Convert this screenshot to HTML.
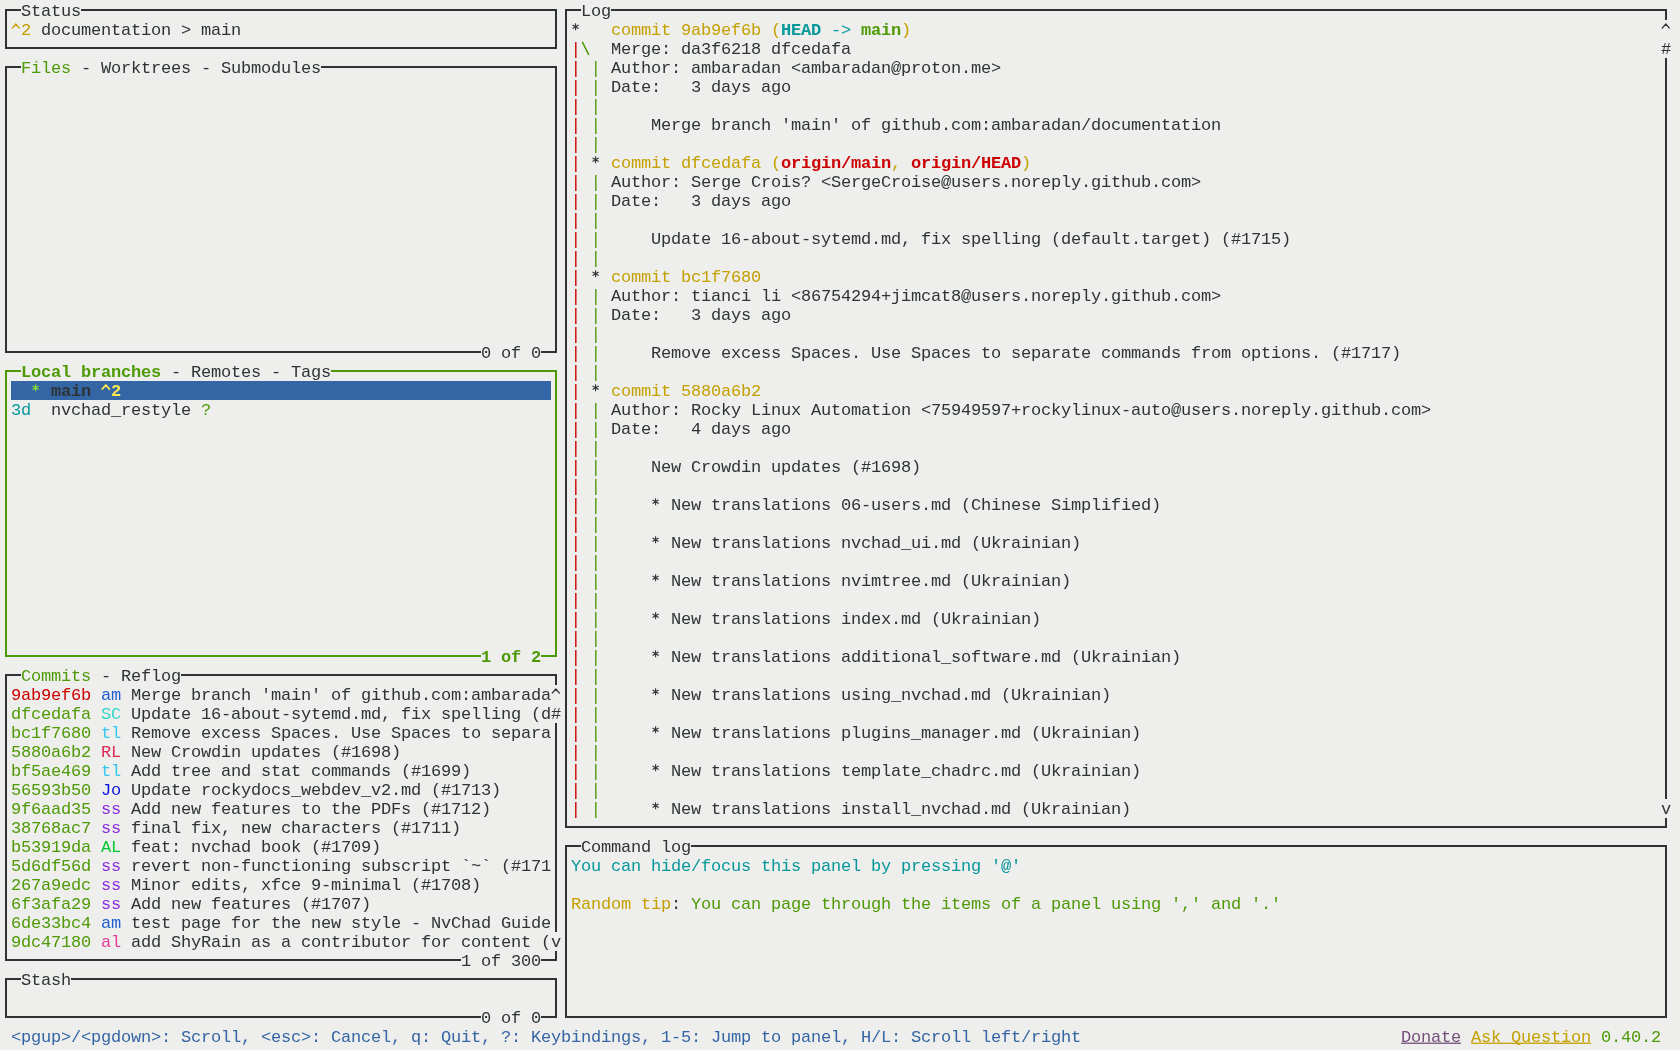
<!DOCTYPE html><html><head><meta charset="utf-8"><style>
html,body{margin:0;padding:0;}
body{width:1680px;height:1050px;overflow:hidden;background:#eeeeec;position:relative;}
.l{position:absolute;}
.r{position:absolute;left:1px;height:19px;white-space:pre;font-family:"Liberation Mono",monospace;font-size:17.0px;line-height:19px;letter-spacing:-0.2017px;color:#2e3436;will-change:transform;}
.b{font-weight:bold;}
svg{position:absolute;left:0;top:0;}

</style></head><body>
<div class="l" style="left:5px;top:9px;width:552px;height:2px;background:#2e3436"></div>
<div class="l" style="left:5px;top:47px;width:552px;height:2px;background:#2e3436"></div>
<div class="l" style="left:5px;top:9px;width:2px;height:40px;background:#2e3436"></div>
<div class="l" style="left:555px;top:9px;width:2px;height:40px;background:#2e3436"></div>
<div class="l" style="left:5px;top:66px;width:552px;height:2px;background:#2e3436"></div>
<div class="l" style="left:5px;top:351px;width:552px;height:2px;background:#2e3436"></div>
<div class="l" style="left:5px;top:66px;width:2px;height:287px;background:#2e3436"></div>
<div class="l" style="left:555px;top:66px;width:2px;height:287px;background:#2e3436"></div>
<div class="l" style="left:5px;top:370px;width:552px;height:2px;background:#4e9a06"></div>
<div class="l" style="left:5px;top:655px;width:552px;height:2px;background:#4e9a06"></div>
<div class="l" style="left:5px;top:370px;width:2px;height:287px;background:#4e9a06"></div>
<div class="l" style="left:555px;top:370px;width:2px;height:287px;background:#4e9a06"></div>
<div class="l" style="left:5px;top:674px;width:552px;height:2px;background:#2e3436"></div>
<div class="l" style="left:5px;top:959px;width:552px;height:2px;background:#2e3436"></div>
<div class="l" style="left:5px;top:674px;width:2px;height:287px;background:#2e3436"></div>
<div class="l" style="left:555px;top:674px;width:2px;height:287px;background:#2e3436"></div>
<div class="l" style="left:5px;top:978px;width:552px;height:2px;background:#2e3436"></div>
<div class="l" style="left:5px;top:1016px;width:552px;height:2px;background:#2e3436"></div>
<div class="l" style="left:5px;top:978px;width:2px;height:40px;background:#2e3436"></div>
<div class="l" style="left:555px;top:978px;width:2px;height:40px;background:#2e3436"></div>
<div class="l" style="left:565px;top:9px;width:1102px;height:2px;background:#2e3436"></div>
<div class="l" style="left:565px;top:826px;width:1102px;height:2px;background:#2e3436"></div>
<div class="l" style="left:565px;top:9px;width:2px;height:819px;background:#2e3436"></div>
<div class="l" style="left:1665px;top:9px;width:2px;height:819px;background:#2e3436"></div>
<div class="l" style="left:565px;top:845px;width:1102px;height:2px;background:#2e3436"></div>
<div class="l" style="left:565px;top:1016px;width:1102px;height:2px;background:#2e3436"></div>
<div class="l" style="left:565px;top:845px;width:2px;height:173px;background:#2e3436"></div>
<div class="l" style="left:1665px;top:845px;width:2px;height:173px;background:#2e3436"></div>
<div class="l" style="left:21px;top:1px;width:60px;height:19px;background:#eeeeec"></div>
<div class="l" style="left:581px;top:1px;width:30px;height:19px;background:#eeeeec"></div>
<div class="l" style="left:1661px;top:20px;width:10px;height:19px;background:#eeeeec"></div>
<div class="l" style="left:1661px;top:39px;width:10px;height:19px;background:#eeeeec"></div>
<div class="l" style="left:21px;top:58px;width:300px;height:19px;background:#eeeeec"></div>
<div class="l" style="left:481px;top:343px;width:60px;height:19px;background:#eeeeec"></div>
<div class="l" style="left:21px;top:362px;width:310px;height:19px;background:#eeeeec"></div>
<div class="l" style="left:11px;top:381px;width:540px;height:19px;background:#3465a4"></div>
<div class="l" style="left:481px;top:647px;width:60px;height:19px;background:#eeeeec"></div>
<div class="l" style="left:21px;top:666px;width:160px;height:19px;background:#eeeeec"></div>
<div class="l" style="left:551px;top:685px;width:10px;height:19px;background:#eeeeec"></div>
<div class="l" style="left:551px;top:704px;width:10px;height:19px;background:#eeeeec"></div>
<div class="l" style="left:1661px;top:799px;width:10px;height:19px;background:#eeeeec"></div>
<div class="l" style="left:581px;top:837px;width:110px;height:19px;background:#eeeeec"></div>
<div class="l" style="left:551px;top:932px;width:10px;height:19px;background:#eeeeec"></div>
<div class="l" style="left:461px;top:951px;width:80px;height:19px;background:#eeeeec"></div>
<div class="l" style="left:21px;top:970px;width:50px;height:19px;background:#eeeeec"></div>
<div class="l" style="left:481px;top:1008px;width:60px;height:19px;background:#eeeeec"></div>
<div class="r" style="top:2px">  <span style="color:#2e3436">Status</span>                                                  <span style="color:#2e3436">Log</span></div>
<div class="r" style="top:21px">  <span style="color:#c4a000">2</span> <span style="color:#2e3436">documentation</span> <span style="color:#2e3436">&gt;</span> <span style="color:#2e3436">main</span>                                     <span style="color:#c4a000">commit</span> <span style="color:#c4a000">9ab9ef6b</span> <span style="color:#c4a000">(</span><span class="b" style="color:#06989a">HEAD</span> <span style="color:#06989a">-&gt;</span> <span class="b" style="color:#4e9a06">main</span><span style="color:#c4a000">)</span></div>
<div class="r" style="top:40px">                                                             <span style="color:#2e3436">Merge:</span> <span style="color:#2e3436">da3f6218</span> <span style="color:#2e3436">dfcedafa</span>                                                                                 <span style="color:#2e3436">#</span></div>
<div class="r" style="top:59px">  <span style="color:#4e9a06">Files</span> <span style="color:#2e3436">-</span> <span style="color:#2e3436">Worktrees</span> <span style="color:#2e3436">-</span> <span style="color:#2e3436">Submodules</span>                             <span style="color:#2e3436">Author:</span> <span style="color:#2e3436">ambaradan</span> <span style="color:#2e3436">&lt;ambaradan@proton.me&gt;</span></div>
<div class="r" style="top:78px">                                                             <span style="color:#2e3436">Date:</span>   <span style="color:#2e3436">3</span> <span style="color:#2e3436">days</span> <span style="color:#2e3436">ago</span></div>
<div class="r" style="top:116px">                                                                 <span style="color:#2e3436">Merge</span> <span style="color:#2e3436">branch</span> <span style="color:#2e3436">&#x27;main&#x27;</span> <span style="color:#2e3436">of</span> <span style="color:#2e3436">github.com:ambaradan/documentation</span></div>
<div class="r" style="top:154px">                                                             <span style="color:#c4a000">commit</span> <span style="color:#c4a000">dfcedafa</span> <span style="color:#c4a000">(</span><span class="b" style="color:#cc0000">origin/main</span><span style="color:#c4a000">,</span> <span class="b" style="color:#cc0000">origin/HEAD</span><span style="color:#c4a000">)</span></div>
<div class="r" style="top:173px">                                                             <span style="color:#2e3436">Author:</span> <span style="color:#2e3436">Serge</span> <span style="color:#2e3436">Crois?</span> <span style="color:#2e3436">&lt;SergeCroise@users.noreply.github.com&gt;</span></div>
<div class="r" style="top:192px">                                                             <span style="color:#2e3436">Date:</span>   <span style="color:#2e3436">3</span> <span style="color:#2e3436">days</span> <span style="color:#2e3436">ago</span></div>
<div class="r" style="top:230px">                                                                 <span style="color:#2e3436">Update</span> <span style="color:#2e3436">16-about-sytemd.md,</span> <span style="color:#2e3436">fix</span> <span style="color:#2e3436">spelling</span> <span style="color:#2e3436">(default.target)</span> <span style="color:#2e3436">(#1715)</span></div>
<div class="r" style="top:268px">                                                             <span style="color:#c4a000">commit</span> <span style="color:#c4a000">bc1f7680</span></div>
<div class="r" style="top:287px">                                                             <span style="color:#2e3436">Author:</span> <span style="color:#2e3436">tianci</span> <span style="color:#2e3436">li</span> <span style="color:#2e3436">&lt;86754294+jimcat8@users.noreply.github.com&gt;</span></div>
<div class="r" style="top:306px">                                                             <span style="color:#2e3436">Date:</span>   <span style="color:#2e3436">3</span> <span style="color:#2e3436">days</span> <span style="color:#2e3436">ago</span></div>
<div class="r" style="top:344px">                                                <span style="color:#2e3436">0</span> <span style="color:#2e3436">of</span> <span style="color:#2e3436">0</span>           <span style="color:#2e3436">Remove</span> <span style="color:#2e3436">excess</span> <span style="color:#2e3436">Spaces.</span> <span style="color:#2e3436">Use</span> <span style="color:#2e3436">Spaces</span> <span style="color:#2e3436">to</span> <span style="color:#2e3436">separate</span> <span style="color:#2e3436">commands</span> <span style="color:#2e3436">from</span> <span style="color:#2e3436">options.</span> <span style="color:#2e3436">(#1717)</span></div>
<div class="r" style="top:363px">  <span class="b" style="color:#4e9a06">Local</span> <span class="b" style="color:#4e9a06">branches</span> <span style="color:#2e3436">-</span> <span style="color:#2e3436">Remotes</span> <span style="color:#2e3436">-</span> <span style="color:#2e3436">Tags</span></div>
<div class="r" style="top:382px">     <span class="b" style="color:#2e3436">main</span>  <span class="b" style="color:#fce94f">2</span>                                                 <span style="color:#c4a000">commit</span> <span style="color:#c4a000">5880a6b2</span></div>
<div class="r" style="top:401px"> <span style="color:#06989a">3d</span>  <span style="color:#2e3436">nvchad_restyle</span> <span style="color:#4e9a06">?</span>                                        <span style="color:#2e3436">Author:</span> <span style="color:#2e3436">Rocky</span> <span style="color:#2e3436">Linux</span> <span style="color:#2e3436">Automation</span> <span style="color:#2e3436">&lt;75949597+rockylinux-auto@users.noreply.github.com&gt;</span></div>
<div class="r" style="top:420px">                                                             <span style="color:#2e3436">Date:</span>   <span style="color:#2e3436">4</span> <span style="color:#2e3436">days</span> <span style="color:#2e3436">ago</span></div>
<div class="r" style="top:458px">                                                                 <span style="color:#2e3436">New</span> <span style="color:#2e3436">Crowdin</span> <span style="color:#2e3436">updates</span> <span style="color:#2e3436">(#1698)</span></div>
<div class="r" style="top:496px">                                                                   <span style="color:#2e3436">New</span> <span style="color:#2e3436">translations</span> <span style="color:#2e3436">06-users.md</span> <span style="color:#2e3436">(Chinese</span> <span style="color:#2e3436">Simplified)</span></div>
<div class="r" style="top:534px">                                                                   <span style="color:#2e3436">New</span> <span style="color:#2e3436">translations</span> <span style="color:#2e3436">nvchad_ui.md</span> <span style="color:#2e3436">(Ukrainian)</span></div>
<div class="r" style="top:572px">                                                                   <span style="color:#2e3436">New</span> <span style="color:#2e3436">translations</span> <span style="color:#2e3436">nvimtree.md</span> <span style="color:#2e3436">(Ukrainian)</span></div>
<div class="r" style="top:610px">                                                                   <span style="color:#2e3436">New</span> <span style="color:#2e3436">translations</span> <span style="color:#2e3436">index.md</span> <span style="color:#2e3436">(Ukrainian)</span></div>
<div class="r" style="top:648px">                                                <span class="b" style="color:#4e9a06">1</span> <span class="b" style="color:#4e9a06">of</span> <span class="b" style="color:#4e9a06">2</span>             <span style="color:#2e3436">New</span> <span style="color:#2e3436">translations</span> <span style="color:#2e3436">additional_software.md</span> <span style="color:#2e3436">(Ukrainian)</span></div>
<div class="r" style="top:667px">  <span style="color:#4e9a06">Commits</span> <span style="color:#2e3436">-</span> <span style="color:#2e3436">Reflog</span></div>
<div class="r" style="top:686px"> <span style="color:#cc0000">9ab9ef6b</span> <span style="color:#1f5fd2">am</span> <span style="color:#2e3436">Merge</span> <span style="color:#2e3436">branch</span> <span style="color:#2e3436">&#x27;main&#x27;</span> <span style="color:#2e3436">of</span> <span style="color:#2e3436">github.com:ambarada</span>            <span style="color:#2e3436">New</span> <span style="color:#2e3436">translations</span> <span style="color:#2e3436">using_nvchad.md</span> <span style="color:#2e3436">(Ukrainian)</span></div>
<div class="r" style="top:705px"> <span style="color:#4e9a06">dfcedafa</span> <span style="color:#33d6c6">SC</span> <span style="color:#2e3436">Update</span> <span style="color:#2e3436">16-about-sytemd.md,</span> <span style="color:#2e3436">fix</span> <span style="color:#2e3436">spelling</span> <span style="color:#2e3436">(d#</span></div>
<div class="r" style="top:724px"> <span style="color:#4e9a06">bc1f7680</span> <span style="color:#36c6f0">tl</span> <span style="color:#2e3436">Remove</span> <span style="color:#2e3436">excess</span> <span style="color:#2e3436">Spaces.</span> <span style="color:#2e3436">Use</span> <span style="color:#2e3436">Spaces</span> <span style="color:#2e3436">to</span> <span style="color:#2e3436">separa</span>            <span style="color:#2e3436">New</span> <span style="color:#2e3436">translations</span> <span style="color:#2e3436">plugins_manager.md</span> <span style="color:#2e3436">(Ukrainian)</span></div>
<div class="r" style="top:743px"> <span style="color:#4e9a06">5880a6b2</span> <span style="color:#dc2a52">RL</span> <span style="color:#2e3436">New</span> <span style="color:#2e3436">Crowdin</span> <span style="color:#2e3436">updates</span> <span style="color:#2e3436">(#1698)</span></div>
<div class="r" style="top:762px"> <span style="color:#4e9a06">bf5ae469</span> <span style="color:#36c6f0">tl</span> <span style="color:#2e3436">Add</span> <span style="color:#2e3436">tree</span> <span style="color:#2e3436">and</span> <span style="color:#2e3436">stat</span> <span style="color:#2e3436">commands</span> <span style="color:#2e3436">(#1699)</span>                    <span style="color:#2e3436">New</span> <span style="color:#2e3436">translations</span> <span style="color:#2e3436">template_chadrc.md</span> <span style="color:#2e3436">(Ukrainian)</span></div>
<div class="r" style="top:781px"> <span style="color:#4e9a06">56593b50</span> <span style="color:#0a14e0">Jo</span> <span style="color:#2e3436">Update</span> <span style="color:#2e3436">rockydocs_webdev_v2.md</span> <span style="color:#2e3436">(#1713)</span></div>
<div class="r" style="top:800px"> <span style="color:#4e9a06">9f6aad35</span> <span style="color:#8a2be2">ss</span> <span style="color:#2e3436">Add</span> <span style="color:#2e3436">new</span> <span style="color:#2e3436">features</span> <span style="color:#2e3436">to</span> <span style="color:#2e3436">the</span> <span style="color:#2e3436">PDFs</span> <span style="color:#2e3436">(#1712)</span>                  <span style="color:#2e3436">New</span> <span style="color:#2e3436">translations</span> <span style="color:#2e3436">install_nvchad.md</span> <span style="color:#2e3436">(Ukrainian)</span>                                                     <span style="color:#2e3436">v</span></div>
<div class="r" style="top:819px"> <span style="color:#4e9a06">38768ac7</span> <span style="color:#8a2be2">ss</span> <span style="color:#2e3436">final</span> <span style="color:#2e3436">fix,</span> <span style="color:#2e3436">new</span> <span style="color:#2e3436">characters</span> <span style="color:#2e3436">(#1711)</span></div>
<div class="r" style="top:838px"> <span style="color:#4e9a06">b53919da</span> <span style="color:#00c835">AL</span> <span style="color:#2e3436">feat:</span> <span style="color:#2e3436">nvchad</span> <span style="color:#2e3436">book</span> <span style="color:#2e3436">(#1709)</span>                    <span style="color:#2e3436">Command</span> <span style="color:#2e3436">log</span></div>
<div class="r" style="top:857px"> <span style="color:#4e9a06">5d6df56d</span> <span style="color:#8a2be2">ss</span> <span style="color:#2e3436">revert</span> <span style="color:#2e3436">non-functioning</span> <span style="color:#2e3436">subscript</span> <span style="color:#2e3436">`~`</span> <span style="color:#2e3436">(#171</span>  <span style="color:#06989a">You</span> <span style="color:#06989a">can</span> <span style="color:#06989a">hide/focus</span> <span style="color:#06989a">this</span> <span style="color:#06989a">panel</span> <span style="color:#06989a">by</span> <span style="color:#06989a">pressing</span> <span style="color:#06989a">&#x27;@&#x27;</span></div>
<div class="r" style="top:876px"> <span style="color:#4e9a06">267a9edc</span> <span style="color:#8a2be2">ss</span> <span style="color:#2e3436">Minor</span> <span style="color:#2e3436">edits,</span> <span style="color:#2e3436">xfce</span> <span style="color:#2e3436">9-minimal</span> <span style="color:#2e3436">(#1708)</span></div>
<div class="r" style="top:895px"> <span style="color:#4e9a06">6f3afa29</span> <span style="color:#8a2be2">ss</span> <span style="color:#2e3436">Add</span> <span style="color:#2e3436">new</span> <span style="color:#2e3436">features</span> <span style="color:#2e3436">(#1707)</span>                    <span style="color:#c4a000">Random</span> <span style="color:#c4a000">tip</span><span style="color:#2e3436">:</span> <span style="color:#4e9a06">You</span> <span style="color:#4e9a06">can</span> <span style="color:#4e9a06">page</span> <span style="color:#4e9a06">through</span> <span style="color:#4e9a06">the</span> <span style="color:#4e9a06">items</span> <span style="color:#4e9a06">of</span> <span style="color:#4e9a06">a</span> <span style="color:#4e9a06">panel</span> <span style="color:#4e9a06">using</span> <span style="color:#4e9a06">&#x27;,&#x27;</span> <span style="color:#4e9a06">and</span> <span style="color:#4e9a06">&#x27;.&#x27;</span></div>
<div class="r" style="top:914px"> <span style="color:#4e9a06">6de33bc4</span> <span style="color:#1f5fd2">am</span> <span style="color:#2e3436">test</span> <span style="color:#2e3436">page</span> <span style="color:#2e3436">for</span> <span style="color:#2e3436">the</span> <span style="color:#2e3436">new</span> <span style="color:#2e3436">style</span> <span style="color:#2e3436">-</span> <span style="color:#2e3436">NvChad</span> <span style="color:#2e3436">Guide</span></div>
<div class="r" style="top:933px"> <span style="color:#4e9a06">9dc47180</span> <span style="color:#e23e98">al</span> <span style="color:#2e3436">add</span> <span style="color:#2e3436">ShyRain</span> <span style="color:#2e3436">as</span> <span style="color:#2e3436">a</span> <span style="color:#2e3436">contributor</span> <span style="color:#2e3436">for</span> <span style="color:#2e3436">content</span> <span style="color:#2e3436">(v</span></div>
<div class="r" style="top:952px">                                              <span style="color:#2e3436">1</span> <span style="color:#2e3436">of</span> <span style="color:#2e3436">300</span></div>
<div class="r" style="top:971px">  <span style="color:#2e3436">Stash</span></div>
<div class="r" style="top:1009px">                                                <span style="color:#2e3436">0</span> <span style="color:#2e3436">of</span> <span style="color:#2e3436">0</span></div>
<div class="r" style="top:1028px"> <span style="color:#3465a4">&lt;pgup&gt;/&lt;pgdown&gt;:</span> <span style="color:#3465a4">Scroll,</span> <span style="color:#3465a4">&lt;esc&gt;:</span> <span style="color:#3465a4">Cancel,</span> <span style="color:#3465a4">q:</span> <span style="color:#3465a4">Quit,</span> <span style="color:#3465a4">?:</span> <span style="color:#3465a4">Keybindings,</span> <span style="color:#3465a4">1-5:</span> <span style="color:#3465a4">Jump</span> <span style="color:#3465a4">to</span> <span style="color:#3465a4">panel,</span> <span style="color:#3465a4">H/L:</span> <span style="color:#3465a4">Scroll</span> <span style="color:#3465a4">left/right</span>                                <span style="color:#75507b">Donate</span> <span style="color:#c4a000">Ask</span> <span style="color:#c4a000">Question</span> <span style="color:#4e9a06">0.40.2</span></div>
<svg width="1680" height="1050"><rect x="575.1" y="42" width="1.4" height="16" fill="#cc0000"/><line x1="582.5" y1="42.3" x2="588.6" y2="54.4" stroke="#4e9a06" stroke-width="1.5" stroke-linecap="round"/><rect x="575.1" y="61" width="1.4" height="16" fill="#cc0000"/><rect x="595.1" y="61" width="1.4" height="16" fill="#4e9a06"/><rect x="575.1" y="80" width="1.4" height="16" fill="#cc0000"/><rect x="595.1" y="80" width="1.4" height="16" fill="#4e9a06"/><rect x="575.1" y="99" width="1.4" height="16" fill="#cc0000"/><rect x="595.1" y="99" width="1.4" height="16" fill="#4e9a06"/><rect x="575.1" y="118" width="1.4" height="16" fill="#cc0000"/><rect x="595.1" y="118" width="1.4" height="16" fill="#4e9a06"/><rect x="575.1" y="137" width="1.4" height="16" fill="#cc0000"/><rect x="595.1" y="137" width="1.4" height="16" fill="#4e9a06"/><rect x="575.1" y="156" width="1.4" height="16" fill="#cc0000"/><rect x="575.1" y="175" width="1.4" height="16" fill="#cc0000"/><rect x="595.1" y="175" width="1.4" height="16" fill="#4e9a06"/><rect x="575.1" y="194" width="1.4" height="16" fill="#cc0000"/><rect x="595.1" y="194" width="1.4" height="16" fill="#4e9a06"/><rect x="575.1" y="213" width="1.4" height="16" fill="#cc0000"/><rect x="595.1" y="213" width="1.4" height="16" fill="#4e9a06"/><rect x="575.1" y="232" width="1.4" height="16" fill="#cc0000"/><rect x="595.1" y="232" width="1.4" height="16" fill="#4e9a06"/><rect x="575.1" y="251" width="1.4" height="16" fill="#cc0000"/><rect x="595.1" y="251" width="1.4" height="16" fill="#4e9a06"/><rect x="575.1" y="270" width="1.4" height="16" fill="#cc0000"/><rect x="575.1" y="289" width="1.4" height="16" fill="#cc0000"/><rect x="595.1" y="289" width="1.4" height="16" fill="#4e9a06"/><rect x="575.1" y="308" width="1.4" height="16" fill="#cc0000"/><rect x="595.1" y="308" width="1.4" height="16" fill="#4e9a06"/><rect x="575.1" y="327" width="1.4" height="16" fill="#cc0000"/><rect x="595.1" y="327" width="1.4" height="16" fill="#4e9a06"/><rect x="575.1" y="346" width="1.4" height="16" fill="#cc0000"/><rect x="595.1" y="346" width="1.4" height="16" fill="#4e9a06"/><rect x="575.1" y="365" width="1.4" height="16" fill="#cc0000"/><rect x="595.1" y="365" width="1.4" height="16" fill="#4e9a06"/><rect x="575.1" y="384" width="1.4" height="16" fill="#cc0000"/><rect x="575.1" y="403" width="1.4" height="16" fill="#cc0000"/><rect x="595.1" y="403" width="1.4" height="16" fill="#4e9a06"/><rect x="575.1" y="422" width="1.4" height="16" fill="#cc0000"/><rect x="595.1" y="422" width="1.4" height="16" fill="#4e9a06"/><rect x="575.1" y="441" width="1.4" height="16" fill="#cc0000"/><rect x="595.1" y="441" width="1.4" height="16" fill="#4e9a06"/><rect x="575.1" y="460" width="1.4" height="16" fill="#cc0000"/><rect x="595.1" y="460" width="1.4" height="16" fill="#4e9a06"/><rect x="575.1" y="479" width="1.4" height="16" fill="#cc0000"/><rect x="595.1" y="479" width="1.4" height="16" fill="#4e9a06"/><rect x="575.1" y="498" width="1.4" height="16" fill="#cc0000"/><rect x="595.1" y="498" width="1.4" height="16" fill="#4e9a06"/><rect x="575.1" y="517" width="1.4" height="16" fill="#cc0000"/><rect x="595.1" y="517" width="1.4" height="16" fill="#4e9a06"/><rect x="575.1" y="536" width="1.4" height="16" fill="#cc0000"/><rect x="595.1" y="536" width="1.4" height="16" fill="#4e9a06"/><rect x="575.1" y="555" width="1.4" height="16" fill="#cc0000"/><rect x="595.1" y="555" width="1.4" height="16" fill="#4e9a06"/><rect x="575.1" y="574" width="1.4" height="16" fill="#cc0000"/><rect x="595.1" y="574" width="1.4" height="16" fill="#4e9a06"/><rect x="575.1" y="593" width="1.4" height="16" fill="#cc0000"/><rect x="595.1" y="593" width="1.4" height="16" fill="#4e9a06"/><rect x="575.1" y="612" width="1.4" height="16" fill="#cc0000"/><rect x="595.1" y="612" width="1.4" height="16" fill="#4e9a06"/><rect x="575.1" y="631" width="1.4" height="16" fill="#cc0000"/><rect x="595.1" y="631" width="1.4" height="16" fill="#4e9a06"/><rect x="575.1" y="650" width="1.4" height="16" fill="#cc0000"/><rect x="595.1" y="650" width="1.4" height="16" fill="#4e9a06"/><rect x="575.1" y="669" width="1.4" height="16" fill="#cc0000"/><rect x="595.1" y="669" width="1.4" height="16" fill="#4e9a06"/><rect x="575.1" y="688" width="1.4" height="16" fill="#cc0000"/><rect x="595.1" y="688" width="1.4" height="16" fill="#4e9a06"/><rect x="575.1" y="707" width="1.4" height="16" fill="#cc0000"/><rect x="595.1" y="707" width="1.4" height="16" fill="#4e9a06"/><rect x="575.1" y="726" width="1.4" height="16" fill="#cc0000"/><rect x="595.1" y="726" width="1.4" height="16" fill="#4e9a06"/><rect x="575.1" y="745" width="1.4" height="16" fill="#cc0000"/><rect x="595.1" y="745" width="1.4" height="16" fill="#4e9a06"/><rect x="575.1" y="764" width="1.4" height="16" fill="#cc0000"/><rect x="595.1" y="764" width="1.4" height="16" fill="#4e9a06"/><rect x="575.1" y="783" width="1.4" height="16" fill="#cc0000"/><rect x="595.1" y="783" width="1.4" height="16" fill="#4e9a06"/><rect x="575.1" y="802" width="1.4" height="16" fill="#cc0000"/><rect x="595.1" y="802" width="1.4" height="16" fill="#4e9a06"/><path d="M12.2 28.1L15.8 24.0L19.4 28.1" stroke="#c4a000" stroke-width="1.3" fill="none" stroke-linejoin="round" stroke-linecap="round"/><path d="M575.60 23.20L575.60 30.20M572.57 24.95L578.63 28.45M578.63 24.95L572.57 28.45" stroke="#2e3436" stroke-width="1.1" fill="none"/><path d="M1662.2 28.1L1665.8 24.0L1669.4 28.1" stroke="#2e3436" stroke-width="1.3" fill="none" stroke-linejoin="round" stroke-linecap="round"/><path d="M595.60 156.20L595.60 163.20M592.57 157.95L598.63 161.45M598.63 157.95L592.57 161.45" stroke="#2e3436" stroke-width="1.1" fill="none"/><path d="M595.60 270.20L595.60 277.20M592.57 271.95L598.63 275.45M598.63 271.95L592.57 275.45" stroke="#2e3436" stroke-width="1.1" fill="none"/><path d="M35.60 384.20L35.60 391.20M32.57 385.95L38.63 389.45M38.63 385.95L32.57 389.45" stroke="#8ae234" stroke-width="1.1" fill="none"/><path d="M102.2 389.1L105.8 385.0L109.4 389.1" stroke="#fce94f" stroke-width="1.7" fill="none" stroke-linejoin="round" stroke-linecap="round"/><path d="M595.60 384.20L595.60 391.20M592.57 385.95L598.63 389.45M598.63 385.95L592.57 389.45" stroke="#2e3436" stroke-width="1.1" fill="none"/><path d="M655.60 498.20L655.60 505.20M652.57 499.95L658.63 503.45M658.63 499.95L652.57 503.45" stroke="#2e3436" stroke-width="1.1" fill="none"/><path d="M655.60 536.20L655.60 543.20M652.57 537.95L658.63 541.45M658.63 537.95L652.57 541.45" stroke="#2e3436" stroke-width="1.1" fill="none"/><path d="M655.60 574.20L655.60 581.20M652.57 575.95L658.63 579.45M658.63 575.95L652.57 579.45" stroke="#2e3436" stroke-width="1.1" fill="none"/><path d="M655.60 612.20L655.60 619.20M652.57 613.95L658.63 617.45M658.63 613.95L652.57 617.45" stroke="#2e3436" stroke-width="1.1" fill="none"/><path d="M655.60 650.20L655.60 657.20M652.57 651.95L658.63 655.45M658.63 651.95L652.57 655.45" stroke="#2e3436" stroke-width="1.1" fill="none"/><path d="M552.2 693.1L555.8 689.0L559.4 693.1" stroke="#2e3436" stroke-width="1.3" fill="none" stroke-linejoin="round" stroke-linecap="round"/><path d="M655.60 688.20L655.60 695.20M652.57 689.95L658.63 693.45M658.63 689.95L652.57 693.45" stroke="#2e3436" stroke-width="1.1" fill="none"/><path d="M655.60 726.20L655.60 733.20M652.57 727.95L658.63 731.45M658.63 727.95L652.57 731.45" stroke="#2e3436" stroke-width="1.1" fill="none"/><path d="M655.60 764.20L655.60 771.20M652.57 765.95L658.63 769.45M658.63 765.95L652.57 769.45" stroke="#2e3436" stroke-width="1.1" fill="none"/><path d="M655.60 802.20L655.60 809.20M652.57 803.95L658.63 807.45M658.63 803.95L652.57 807.45" stroke="#2e3436" stroke-width="1.1" fill="none"/><rect x="1401" y="1042.6" width="10" height="1.3" fill="#75507b"/><rect x="1411" y="1042.6" width="10" height="1.3" fill="#75507b"/><rect x="1421" y="1042.6" width="10" height="1.3" fill="#75507b"/><rect x="1431" y="1042.6" width="10" height="1.3" fill="#75507b"/><rect x="1441" y="1042.6" width="10" height="1.3" fill="#75507b"/><rect x="1451" y="1042.6" width="10" height="1.3" fill="#75507b"/><rect x="1471" y="1042.6" width="10" height="1.3" fill="#c4a000"/><rect x="1481" y="1042.6" width="10" height="1.3" fill="#c4a000"/><rect x="1491" y="1042.6" width="10" height="1.3" fill="#c4a000"/><rect x="1501" y="1042.6" width="10" height="1.3" fill="#c4a000"/><rect x="1511" y="1042.6" width="10" height="1.3" fill="#c4a000"/><rect x="1521" y="1042.6" width="10" height="1.3" fill="#c4a000"/><rect x="1531" y="1042.6" width="10" height="1.3" fill="#c4a000"/><rect x="1541" y="1042.6" width="10" height="1.3" fill="#c4a000"/><rect x="1551" y="1042.6" width="10" height="1.3" fill="#c4a000"/><rect x="1561" y="1042.6" width="10" height="1.3" fill="#c4a000"/><rect x="1571" y="1042.6" width="10" height="1.3" fill="#c4a000"/><rect x="1581" y="1042.6" width="10" height="1.3" fill="#c4a000"/></svg>
</body></html>
